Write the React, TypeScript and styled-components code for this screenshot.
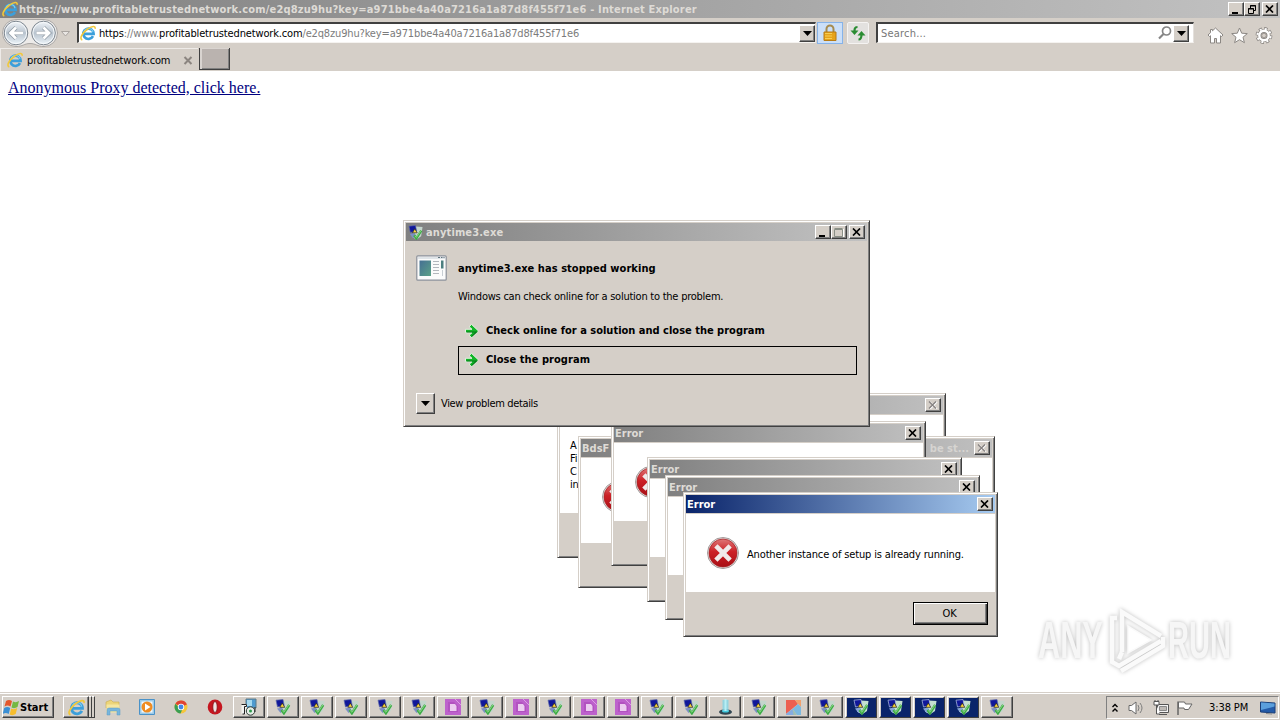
import React from 'react';
import styled, { createGlobalStyle, css } from 'styled-components';

const GlobalStyle = createGlobalStyle`
  * {
    box-sizing: border-box;
  }
  body {
    margin: 0;
    overflow: hidden;
    background: #fff;
    font-family: 'DejaVu Sans Condensed', 'DejaVu Sans', sans-serif;
    font-size: 11px;
    color: #000;
  }
  svg {
    display: block;
    flex: none;
  }
`;

const raised = css`
  border: 1px solid;
  border-color: #fff #404040 #404040 #fff;
  box-shadow: inset -1px -1px 0 #808080;
  background: #d5cfc8;
`;

const Screen = styled.div`
  position: relative;
  width: 1280px;
  height: 720px;
  display: flex;
  flex-direction: column;
  overflow: hidden;
`;

interface TextProps {
  $bold?: boolean;
  $color?: string;
  $spacing?: number;
}
const Text = styled.span<TextProps>`
  white-space: pre;
  line-height: 13px;
  font-weight: ${(props) => (props.$bold ? 'bold' : 'normal')};
  color: ${(props) => props.$color || 'inherit'};
  letter-spacing: ${(props) => props.$spacing ?? -0.15}px;
`;

const Gap = styled.div<{ $width?: number; $height?: number }>`
  flex: none;
  width: ${(props) => props.$width || 0}px;
  height: ${(props) => props.$height || 0}px;
`;

const Spacer = styled.div`
  flex: 1;
`;

/* ---------- window chrome ---------- */

interface TitleBarProps {
  $from: string;
  $to: string;
  $left?: number;
}
const TitleBar = styled.div<TitleBarProps>`
  flex: none;
  display: flex;
  align-items: center;
  height: 18px;
  padding: 0 2px 0 ${(props) => props.$left ?? 2}px;
  background: linear-gradient(90deg, ${(props) => props.$from}, ${(props) => props.$to});
`;

const CaptionButton = styled.div<{ $gap?: number }>`
  ${raised}
  width: 16px;
  height: 14px;
  margin-left: ${(props) => props.$gap || 0}px;
  display: flex;
  align-items: center;
  justify-content: center;
`;

function CloseGlyph({ dim = false }: { dim?: boolean }) {
  return (
    <svg width="10" height="8" viewBox="0 0 10 8">
      {dim && <path d="M2 1l7 7M9 1l-7 7" stroke="#fff" strokeWidth="1.4" />}
      <path d="M1 .5l7 7M8 .5l-7 7" stroke={dim ? '#858180' : '#000'} strokeWidth={dim ? 1.3 : 1.7} />
    </svg>
  );
}

function MinGlyph() {
  return (
    <svg width="10" height="9" viewBox="0 0 10 9">
      <path d="M1 7h6v2H1z" />
    </svg>
  );
}

function MaxGlyph() {
  return (
    <svg width="10" height="9" viewBox="0 0 10 9">
      <path d="M.5 1.5h8v7h-8zM.5.5h8" fill="none" stroke="#8a8f86" />
      <path d="M9.5 1v8.5" stroke="#fff" />
    </svg>
  );
}

function RestoreGlyph() {
  return (
    <svg width="10" height="9" viewBox="0 0 10 9" fill="none" stroke="#000">
      <path d="M3.5 3V.5h5v5H6M3 1h6" />
      <path d="M1.5 3.5h5v5h-5zM1 4h6" />
    </svg>
  );
}

/* ---------- icons ---------- */

function IeIcon({ size = 16 }: { size?: number }) {
  return (
    <svg width={size} height={size} viewBox="0 0 16 16" fill="none">
      <path d="M13 11.200A5.200 5.200 0 1 1 13.600 8.800H4.500" stroke="#3c9fdb" strokeWidth="2.700" />
      <path d="M4 7.200a4.600 4.600 0 0 1 9 0" stroke="#7fd0f2" strokeWidth="1.100" />
      <path d="M2.300 14.900C-1 14 2.200 8 7 4.500S15.800.4 15 3.800" stroke="#f2c83a" strokeWidth="1.600" />
    </svg>
  );
}

function SetupIcon({ size = 16, selected = false }: { size?: number; selected?: boolean }) {
  return (
    <svg width={size} height={size} viewBox="0 0 16 16">
      <path d="M8 1.500l7.500.5-1.500 10-5 3.500-5-3z" fill={selected ? '#c3dfd0' : '#c4d5cc'} />
      <path d="M1 1.200L8 .5l1.200 6L2.500 8z" fill="#10179a" stroke={selected ? '#b9c6e8' : '#5f6aa8'} strokeWidth=".7" />
      <path d="M2 9.500l5-1 1.500 3-3 2.500z" fill={selected ? '#88a7d8' : '#7d8fc4'} />
      <path d="M4.800 8.300L7.200 4l2.600 4.300z" fill="#ffd83a" stroke="#1d1d25" strokeWidth=".7" />
      <path d="M6.500 11l2.400 3.200L14.200 6" fill="none" stroke="#3dab45" strokeWidth="2.500" />
      <path d="M7.200 11.500l1.700 1.700L13.800 6" fill="none" stroke="#9be392" strokeWidth=".8" />
    </svg>
  );
}

function ErrorIcon() {
  return (
    <svg width="34" height="34" viewBox="0 0 34 34">
      <defs>
        <linearGradient id="err" x1="0" y1="0" x2="0" y2="1">
          <stop offset="0" stopColor="#df7777" />
          <stop offset=".45" stopColor="#cc2026" />
          <stop offset="1" stopColor="#a90e15" />
        </linearGradient>
      </defs>
      <circle cx="17" cy="17" r="15.500" fill="#e8dddd" stroke="#8d8585" strokeWidth=".8" />
      <circle cx="17" cy="17" r="14" fill="url(#err)" stroke="#a21d20" strokeWidth=".7" />
      <path d="M11.500 11.500l11 11M22.500 11.500l-11 11" stroke="#f0eaea" strokeWidth="4.600" strokeLinecap="square" />
    </svg>
  );
}

function ArrowIcon() {
  return (
    <svg width="16" height="16" viewBox="0 0 16 16">
      <path
        d="M1.500 6.300H8L5.300 3.800 7.400 1.300 14.500 8l-7.100 6.700-2.100-2.500L8 9.700H1.500z"
        fill="#12b528"
        stroke="#eef6ea"
        strokeWidth=".9"
      />
      <path d="M2.500 9h10L7.800 13.300" fill="none" stroke="#067a18" strokeWidth="1.100" />
    </svg>
  );
}

function DownTriangle() {
  return (
    <svg width="9" height="5" viewBox="0 0 9 5">
      <path d="M0 0h9L4.500 5z" />
    </svg>
  );
}

function AppWindowIcon() {
  return (
    <svg width="31" height="26" viewBox="0 0 31 26">
      <defs>
        <linearGradient id="pic" x1="0" y1="0" x2="1" y2="1">
          <stop offset="0" stopColor="#456f93" />
          <stop offset="1" stopColor="#5ba187" />
        </linearGradient>
      </defs>
      <rect x=".8" y=".8" width="29.400" height="24.400" rx="1" fill="#fbfbfb" stroke="#8b9099" strokeWidth="1.200" />
      <path d="M2 2h27v2H2z" fill="#dfe4e8" />
      <path d="M22 2.500h2M25 2.500h1.500M27.500 2.500h1" stroke="#5e737d" />
      <path d="M3.500 5.500h11.500v15.500h-11.500z" fill="url(#pic)" />
      <path d="M17 6.500h6M17 9.500h6M17 12.500h6M17 15.500h6M17 18.500h6" stroke="#b3b7bd" />
      <path d="M25 5.500h2.500v8h-2.500z" fill="#4c7f80" />
      <path d="M26.500 15v6" stroke="#c8ced3" />
    </svg>
  );
}

/* ---------- browser ---------- */

const Toolbar = styled.div`
  flex: none;
  display: flex;
  align-items: flex-start;
  height: 30px;
  padding: 4px 7px 0 2px;
  background: #d5cfc8;
`;

const Field = styled.div<{ $width: number; $pad: number }>`
  display: flex;
  align-items: center;
  width: ${(props) => props.$width}px;
  height: 21px;
  padding: 0 ${(props) => props.$pad}px 0 1px;
  background: #fff;
  border: 2px solid;
  border-color: #404040 #e4e0dc #f5f3f0 #404040;
  border-width: 2px 1px 1px 2px;
`;

const DropButton = styled.div<{ $width?: number; $height?: number }>`
  ${raised}
  flex: none;
  display: flex;
  align-items: center;
  justify-content: center;
  width: ${(props) => props.$width || 16}px;
  height: ${(props) => props.$height || 17}px;
`;

const ToolButton = styled.div<{ $active?: boolean; $width: number }>`
  display: flex;
  align-items: center;
  justify-content: center;
  width: ${(props) => props.$width}px;
  height: 22px;
  border: 1px solid ${(props) => (props.$active ? '#86b3e9' : '#f5f3f2')};
  border-radius: ${(props) => (props.$active ? 0 : 2)}px;
  background: ${(props) => (props.$active ? '#cbdff8' : '#e3e1df')};
`;

const Actions = styled.div`
  display: flex;
  gap: 7px;
  padding-top: 5px;
`;

const TabStrip = styled.div`
  flex: none;
  display: flex;
  height: 23px;
  background: #d5cfc8;
`;

const Tab = styled.div`
  display: flex;
  align-items: center;
  gap: 4px;
  width: 198px;
  padding: 0 5px 0 6px;
  border: solid #eeebe8;
  border-width: 1px 0 0 1px;
`;

const NewTab = styled.div`
  width: 31px;
  height: 22px;
  margin-left: 1px;
  background: #bab3af;
  border: solid #404040;
  border-width: 0 1px 1px 1px;
  box-shadow: inset 2px 1px 0 #d9d4d0, inset -1px -1px 0 #808080;
`;

const Page = styled.div`
  flex: 1;
  padding: 7px 8px;
  background: #fff;
`;

const ProxyLink = styled.a`
  font-family: 'Liberation Serif', serif;
  font-size: 16px;
  line-height: 19px;
  color: #000080;
  text-decoration: underline;
`;

const NavArea = styled.div`
  flex: none;
  width: 75px;
  margin-top: -3px;
`;

function NavButtons() {
  return (
    <NavArea>
      <svg width="70" height="28" viewBox="2 0 70 28">
        <defs>
          <linearGradient id="nav" x1="0" y1="0" x2="0" y2="1">
            <stop offset="0" stopColor="#f2f6fa" />
            <stop offset=".5" stopColor="#b8c3ce" />
            <stop offset="1" stopColor="#eef6fb" />
          </linearGradient>
        </defs>
        <path d="M16 .5h28a13.500 13.500 0 0 1 0 27c-7 0-8-3-14-3s-7 3-14 3a13.500 13.500 0 0 1 0-27z" fill="#edebe9" stroke="#aaa7a5" />
        {[16, 43.5].map((x) => (
          <g key={x}>
            <circle cx={x} cy="14" r="11.800" fill="url(#nav)" stroke="#7e8790" />
            <circle cx={x} cy="14" r="10.600" fill="none" stroke="#f6f9fb" />
          </g>
        ))}
        <g fill="none" stroke="#8e99a3" strokeWidth="4.200">
          <path d="M23 14H11M16 8.500L10.500 14l5.500 5.500" />
          <path d="M36.500 14h12M43.500 8.500L49 14l-5.500 5.500" />
        </g>
        <g fill="none" stroke="#fff" strokeWidth="2.800">
          <path d="M23 14H11M16 8.500L10.500 14l5.500 5.500" />
          <path d="M36.500 14h12M43.500 8.500L49 14l-5.500 5.500" />
        </g>
        <path d="M61.500 12.500h8L65.500 17z" fill="#e9e6e3" stroke="#aaa5a1" />
      </svg>
    </NavArea>
  );
}

function LockIcon() {
  return (
    <svg width="16" height="18" viewBox="0 0 16 18">
      <path d="M4.500 8V5a3.500 3.500 0 0 1 7 0v3" fill="none" stroke="#a68b4f" strokeWidth="2" />
      <path d="M2 8h12v8.500H2z" fill="#e6a31b" stroke="#b77b14" />
      <path d="M3 9.500h7M3 12h7M3 14.500h7" stroke="#f7ce54" />
    </svg>
  );
}

function RefreshIcon() {
  return (
    <svg width="16" height="16" viewBox="0 0 16 16" fill="none" stroke="#2a8c32" strokeWidth="2.200">
      <path d="M7.500 2C4.500 2 4.500 4 4.500 7" />
      <path d="M.5 5.500l4 4.500 4-4.500z" fill="#2a8c32" stroke="none" />
      <path d="M8.500 14.500c3 0 3-2.500 3-5" />
      <path d="M7.500 10.500l4-4.500 4 4.500z" fill="#2a8c32" stroke="none" />
    </svg>
  );
}

function SearchIcon() {
  return (
    <svg width="14" height="14" viewBox="0 0 14 14" fill="none" stroke="#858585">
      <circle cx="8.500" cy="5" r="4" strokeWidth="1.700" />
      <path d="M5.500 8L1 12.500" strokeWidth="2.200" />
    </svg>
  );
}

function HomeIcon() {
  return (
    <svg width="17" height="17" viewBox="0 0 17 17">
      <path
        d="M8.500 1l7.500 7-1.500 1.500-1-.8V16h-4v-4.500h-2V16h-4V8.700l-1 .8L1 8l2.500-2.300V2.500h2v1.300z"
        fill="#fff"
        stroke="#8b8783"
      />
    </svg>
  );
}

function StarIcon() {
  return (
    <svg width="17" height="17" viewBox="0 0 17 17">
      <path d="M8.500 1l2.200 5.200 5.600.4-4.300 3.600 1.400 5.500-4.900-3-4.900 3L5 10.200.7 6.600l5.600-.4z" fill="#fff" stroke="#8b8783" />
    </svg>
  );
}

function GearIcon() {
  return (
    <svg width="18" height="17" viewBox="0 0 17 17">
      <circle cx="8.500" cy="8.500" r="6.800" fill="none" stroke="#8b8783" strokeWidth="3.200" strokeDasharray="3.200 2.140" />
      <circle cx="8.500" cy="8.500" r="4.600" fill="none" stroke="#8b8783" strokeWidth="4" />
      <circle cx="8.500" cy="8.500" r="6.600" fill="none" stroke="#fff" strokeWidth="2" strokeDasharray="2 3.184" strokeDashoffset="-.6" />
      <circle cx="8.500" cy="8.500" r="4.700" fill="none" stroke="#fff" strokeWidth="2.400" />
      <circle cx="8.500" cy="8.500" r="2.300" fill="#d5cfc8" stroke="#8b8783" strokeWidth=".8" />
    </svg>
  );
}

function Browser() {
  return (
    <>
      <TitleBar $from="#808080" $to="#c2c2c2">
        <IeIcon />
        <Gap $width={1} />
        <Text $bold $color="#dedbd6" $spacing={0.17}>
          https://www.profitabletrustednetwork.com/e2q8zu9hu?key=a971bbe4a40a7216a1a87d8f455f71e6 - Internet Explorer
        </Text>
        <Spacer />
        <CaptionButton><MinGlyph /></CaptionButton>
        <CaptionButton><RestoreGlyph /></CaptionButton>
        <CaptionButton $gap={2}><CloseGlyph /></CaptionButton>
      </TitleBar>
      <Toolbar>
        <NavButtons />
        <Field $width={739} $pad={0}>
          <IeIcon />
          <Gap $width={3} />
          <Text>https</Text>
          <Text $color="#7c7c7c">://www.</Text>
          <Text>profitabletrustednetwork.com</Text>
          <Text $color="#7c7c7c">/e2q8zu9hu?key=a971bbe4a40a7216a1a87d8f455f71e6</Text>
          <Spacer />
          <DropButton><DownTriangle /></DropButton>
        </Field>
        <Gap $width={1} />
        <ToolButton $active $width={26}><LockIcon /></ToolButton>
        <Gap $width={4} />
        <ToolButton $width={22}><RefreshIcon /></ToolButton>
        <Gap $width={7} />
        <Field $width={318} $pad={4}>
          <Gap $width={2} />
          <Text $color="#777" $spacing={0.2}>Search...</Text>
          <Spacer />
          <SearchIcon />
          <Gap $width={1} />
          <DropButton><DownTriangle /></DropButton>
        </Field>
        <Spacer />
        <Actions>
          <HomeIcon />
          <StarIcon />
          <GearIcon />
        </Actions>
      </Toolbar>
      <TabStrip>
        <Tab>
          <IeIcon />
          <Text>profitabletrustednetwork.com</Text>
          <Spacer />
          <svg width="10" height="9" viewBox="0 0 10 9">
            <path d="M1.500 1l7 7M8.500 1l-7 7" stroke="#8b8580" strokeWidth="2" />
          </svg>
        </Tab>
        <NewTab />
      </TabStrip>
      <Page>
        <ProxyLink>Anonymous Proxy detected, click here.</ProxyLink>
      </Page>
    </>
  );
}

/* ---------- dialogs ---------- */

interface WindowProps {
  $x: number;
  $y: number;
  $w: number;
  $h: number;
}
const Window = styled.div<WindowProps>`
  position: absolute;
  left: ${(props) => props.$x}px;
  top: ${(props) => props.$y}px;
  width: ${(props) => props.$w}px;
  height: ${(props) => props.$h}px;
  display: flex;
  flex-direction: column;
  padding: 2px;
  background: #d5cfc8;
  border: 1px solid;
  border-color: #d5cfc8 #404040 #404040 #d5cfc8;
  box-shadow: inset 1px 1px 0 #fff, inset -1px -1px 0 #808080;
`;

const MessageArea = styled.div<{ $height: number; $left: number; $bottom?: number }>`
  display: flex;
  align-items: center;
  height: ${(props) => props.$height}px;
  margin-top: 1px;
  padding-left: ${(props) => props.$left}px;
  padding-bottom: ${(props) => props.$bottom || 0}px;
  gap: 7px;
  background: #fff;
`;

const MessageText = styled.div`
  padding-top: 2px;
`;

const Footer = styled.div`
  flex: 1;
  display: flex;
  align-items: center;
  justify-content: flex-end;
  padding-right: 7px;
`;

const OkButton = styled.div`
  display: flex;
  align-items: center;
  justify-content: center;
  width: 75px;
  height: 23px;
  padding-right: 2px;
  border: 1px solid #000;
  background: #d5cfc8;
  box-shadow: inset 1px 1px 0 #fff, inset -1px -1px 0 #404040, inset -2px -2px 0 #808080;
`;

const Lines = styled.div`
  display: flex;
  flex-direction: column;
  padding-top: 2px;
`;

interface ErrorWindowProps {
  x: number;
  y: number;
  message?: string;
}
function ErrorWindow({ x, y, message }: ErrorWindowProps) {
  return (
    <Window $x={x} $y={y} $w={315} $h={145}>
      <TitleBar $left={1} $from={message ? '#0a246a' : '#808080'} $to={message ? '#a6caf0' : '#c0c0c0'}>
        <Text $bold $color={message ? '#fff' : '#dedbd6'} $spacing={0}>Error</Text>
        <Spacer />
        <CaptionButton><CloseGlyph /></CaptionButton>
      </TitleBar>
      <MessageArea $height={78} $left={20}>
        <ErrorIcon />
        {message && <MessageText><Text>{message}</Text></MessageText>}
      </MessageArea>
      {message && (
        <Footer>
          <OkButton><Text>OK</Text></OkButton>
        </Footer>
      )}
    </Window>
  );
}

const CrashBody = styled.div`
  flex: 1;
  display: flex;
  flex-direction: column;
  padding: 14px 10px 8px;
`;

const CrashRow = styled.div<{ $gap: number; $top?: number; $left?: number }>`
  display: flex;
  align-items: center;
  gap: ${(props) => props.$gap}px;
  margin-top: ${(props) => props.$top || 0}px;
  margin-left: ${(props) => props.$left || 0}px;
`;

const CommandLink = styled.div<{ $focused?: boolean }>`
  display: flex;
  align-items: center;
  gap: 6px;
  width: 399px;
  height: 29px;
  margin-left: 42px;
  padding: 0 0 3px 5px;
  border: 1px solid ${(props) => (props.$focused ? '#000' : 'transparent')};

  svg {
    margin-top: 2px;
  }
`;

function CrashWindow() {
  return (
    <Window $x={403} $y={220} $w={467} $h={207}>
      <TitleBar $from="#808080" $to="#c2c2c2">
        <SetupIcon size={15} />
        <Gap $width={3} />
        <Text $bold $color="#dedbd6" $spacing={0.12}>anytime3.exe</Text>
        <Spacer />
        <CaptionButton><MinGlyph /></CaptionButton>
        <CaptionButton><MaxGlyph /></CaptionButton>
        <CaptionButton $gap={2}><CloseGlyph /></CaptionButton>
      </TitleBar>
      <CrashBody>
        <CrashRow $gap={11}>
          <AppWindowIcon />
          <Text $bold $spacing={0.05}>anytime3.exe has stopped working</Text>
        </CrashRow>
        <CrashRow $gap={0} $top={9} $left={42}>
          <Text $spacing={-0.24}>Windows can check online for a solution to the problem.</Text>
        </CrashRow>
        <Gap $height={14} />
        <CommandLink>
          <ArrowIcon />
          <Text $bold $spacing={0}>Check online for a solution and close the program</Text>
        </CommandLink>
        <CommandLink $focused>
          <ArrowIcon />
          <Text $bold $spacing={0.05}>Close the program</Text>
        </CommandLink>
        <CrashRow $gap={6} $top={18}>
          <DropButton $width={19} $height={21}><DownTriangle /></DropButton>
          <Text $spacing={-0.34}>View problem details</Text>
        </CrashRow>
      </CrashBody>
    </Window>
  );
}

function Dialogs() {
  return (
    <>
      <Window $x={557} $y={393} $w={389} $h={165}>
        <TitleBar $from="#808080" $to="#c0c0c0">
          <Spacer />
          <CaptionButton><CloseGlyph dim /></CaptionButton>
        </TitleBar>
        <MessageArea $height={98} $left={10}>
          <Lines>
            <Text>A</Text>
            <Text>Fi</Text>
            <Text>C</Text>
            <Text>in</Text>
          </Lines>
        </MessageArea>
      </Window>
      <Window $x={578} $y={436} $w={417} $h={152}>
        <TitleBar $left={1} $from="#808080" $to="#c0c0c0">
          <Text $bold $color="#dedbd6" $spacing={0}>BdsF</Text>
          <Spacer />
          <Text $bold $color="#d6d4d1" $spacing={0}>be st...</Text>
          <Gap $width={5} />
          <CaptionButton><CloseGlyph dim /></CaptionButton>
        </TitleBar>
        <MessageArea $height={85} $left={20} $bottom={7}>
          <ErrorIcon />
        </MessageArea>
      </Window>
      <ErrorWindow x={611} y={421} />
      <ErrorWindow x={647} y={457} />
      <ErrorWindow x={665} y={475} />
      <ErrorWindow x={683} y={492} message="Another instance of setup is already running." />
      <CrashWindow />
    </>
  );
}

/* ---------- watermark ---------- */

const Watermark = styled.div`
  position: absolute;
  left: 1038px;
  top: 606px;
  width: 194px;
  height: 68px;
  display: flex;
  align-items: center;
  filter: drop-shadow(0 0 2px rgba(0, 0, 0, 0.26));
`;

const WatermarkWord = styled.div<{ $scale: number }>`
  flex: none;
  width: 66px;
  font-family: 'Liberation Sans', sans-serif;
  font-size: 52px;
  font-weight: bold;
  line-height: 68px;
  white-space: nowrap;
  color: #f6f6f6;
  transform: scaleX(${(props) => props.$scale});
  transform-origin: 0 50%;
`;

function AnyRunMark() {
  return (
    <Watermark>
      <WatermarkWord $scale={0.59}>ANY</WatermarkWord>
      <svg width="64" height="68" viewBox="0 0 64 68" fill="none" stroke="#fafafa" strokeWidth="4.500">
        <path d="M18 46V6l39 24" />
        <path d="M13 12H8v44l7 4 42-25" />
        <path d="M18 46l-3 7" />
        <path d="M24 47V20l23 14z" fill="#fff" strokeWidth="1.500" />
        <path d="M17 65l42-25V31" />
      </svg>
      <WatermarkWord $scale={0.56}>RUN</WatermarkWord>
    </Watermark>
  );
}

/* ---------- taskbar ---------- */

const Taskbar = styled.div`
  flex: none;
  display: flex;
  align-items: flex-start;
  height: 28px;
  padding: 3px 1px 0 2px;
  background: #d5cfc8;
  border-top: 1px solid #d5cfc8;
  box-shadow: inset 0 1px 0 #fff;
`;

const StartButton = styled.div`
  ${raised}
  display: flex;
  align-items: center;
  width: 52px;
  height: 22px;
`;

const TaskButton = styled.div<{ $width?: number; $gap?: number }>`
  ${raised}
  flex: none;
  display: flex;
  align-items: center;
  justify-content: center;
  width: ${(props) => props.$width || 32}px;
  height: 22px;
  margin-right: ${(props) => props.$gap ?? 2}px;
`;

const Highlight = styled.div`
  display: flex;
  align-items: center;
  justify-content: center;
  width: 29px;
  height: 19px;
  background: #0a246a;
`;

const StackEdge = styled.div`
  width: 3px;
  height: 22px;
  border-right: 1px solid #404040;
  border-top: 1px solid #fff;
  border-bottom: 1px solid #404040;
`;

const Pinned = styled.div`
  display: flex;
  align-items: center;
  justify-content: center;
  width: 34px;
  height: 22px;
`;

const Tray = styled.div`
  display: flex;
  align-items: center;
  width: 173px;
  height: 23px;
  padding: 0 2px 0 4px;
  border: 1px solid;
  border-color: #808080 #fff #fff #808080;
`;

function WindowsFlag() {
  return (
    <svg width="17" height="17" viewBox="0 0 17 17">
      <path d="M3 2q3-2 6 0L7.500 7.500q-3-2-6 0z" fill="#e5572b" />
      <path d="M10 2.500q3 1.500 6-.5l-1.500 6q-3 2-6 .5z" fill="#75b843" />
      <path d="M1.200 9q3-2 6 0l-1.500 6q-3-2-6 0z" fill="#3b8fd4" />
      <path d="M8.200 9.500q3 1.500 6-.5l-1.500 6q-3 2-6 .5z" fill="#f7bd2c" />
    </svg>
  );
}

function FolderIcon() {
  return (
    <svg width="17" height="17" viewBox="0 0 17 17">
      <path d="M1 3l5-2 2 2h6v6H1z" fill="#ecd57a" stroke="#c9ab4d" strokeWidth=".6" />
      <path d="M1.500 5.500h13v8h-13z" fill="#f5e6a0" />
      <path d="M2 16v-5q0-2 2-2h9q2 0 2 2v5h-3v-4H5v4z" fill="#77b5dc" stroke="#5b99c6" strokeWidth=".5" />
    </svg>
  );
}

function MediaIcon() {
  return (
    <svg width="16" height="16" viewBox="0 0 16 16">
      <path d="M.5.5h15v15H.5z" fill="#9ccbe9" stroke="#4a92c8" />
      <path d="M2.500 2.500h11v11h-11z" fill="#f3f8fc" />
      <circle cx="8" cy="8" r="5.500" fill="#ef8c22" />
      <path d="M6 4.500v7L11.500 8z" fill="#fff" />
    </svg>
  );
}

function ChromeIcon() {
  return (
    <svg width="14" height="14" viewBox="0 0 14 14">
      <circle cx="7" cy="7" r="6.500" fill="#f5c63c" />
      <path d="M7 7L1.400 3.700A6.500 6.500 0 0 1 12.900 4.500z" fill="#df4334" />
      <path d="M1.400 3.700A6.500 6.500 0 0 0 6.500 13.500L9 8 4.500 7z" fill="#3a9e53" />
      <circle cx="7" cy="7" r="3.200" fill="#fff" />
      <circle cx="7" cy="7" r="2.400" fill="#4286e8" />
    </svg>
  );
}

function OperaIcon() {
  return (
    <svg width="16" height="16" viewBox="0 0 16 16">
      <ellipse cx="8" cy="8" rx="7.300" ry="7.600" fill="#c5161f" />
      <ellipse cx="8" cy="8" rx="2.200" ry="5.500" fill="#eee3e1" stroke="#7d0b13" strokeWidth=".8" />
    </svg>
  );
}

function InstallerIcon() {
  return (
    <svg width="18" height="18" viewBox="0 0 18 18">
      <path d="M6 1h10v9H6z" fill="#4f9bd0" stroke="#5c7a88" />
      <path d="M7 2h5v6H7z" fill="#a5d9ef" />
      <path d="M1.500 6h5.500v10H1.500z" fill="#f2f2ef" />
      <path d="M1.500 6.500h5v2h-2v7.500h-2" fill="none" stroke="#222" />
      <circle cx="10.500" cy="13" r="4.200" fill="#e6eee7" stroke="#333c38" />
      <circle cx="10.500" cy="13" r="1.500" fill="#2f9a4b" />
      <path d="M15 9v5" fill="none" stroke="#333" />
    </svg>
  );
}

function PurpleIcon() {
  return (
    <svg width="16" height="16" viewBox="0 0 16 16">
      <path d="M0 0h16v16H0z" fill="#bd62cc" />
      <path d="M3 3h6l4 4v6H3z" fill="#b253c0" />
      <path d="M5 5h5l1.500 2v5H5z" fill="#eccdf0" />
      <path d="M10 0l6 6" stroke="#dc9fe5" />
    </svg>
  );
}

function BeamIcon() {
  return (
    <svg width="15" height="16" viewBox="0 0 15 16">
      <ellipse cx="7.500" cy="13" rx="6.500" ry="2.800" fill="#304652" />
      <ellipse cx="7.500" cy="12" rx="3.500" ry="1.600" fill="#42cbe0" />
      <path d="M4.500 1h6v11h-6z" fill="#7ed6e8" opacity=".75" />
      <path d="M6.500 0h2v12h-2z" fill="#b8eff5" />
    </svg>
  );
}

function ColorsIcon() {
  return (
    <svg width="15" height="15" viewBox="0 0 15 15">
      <path d="M0 0h9l3 4-6 5-6 5z" fill="#ec5f50" />
      <path d="M9 0h6v7l-3-3z" fill="#f2a06c" />
      <path d="M12 4l3 3v8h-4L6.500 9z" fill="#7cb9e0" />
      <path d="M0 14l6.500-5 4.500 6H0z" fill="#9fc0b4" />
      <path d="M0 14l6.500-5 1 6H0z" fill="#86ace0" />
    </svg>
  );
}

const TASKS = [
  'installer', 'setup', 'setup', 'setup', 'setup', 'setup', 'purple', 'setup',
  'purple', 'setup', 'purple', 'purple', 'setup', 'setup', 'beam', 'setup',
  'colors', 'setup', 'alert', 'alert', 'alert', 'alert', 'setup',
];

function TaskIcon({ kind }: { kind: string }) {
  switch (kind) {
    case 'installer':
      return <InstallerIcon />;
    case 'purple':
      return <PurpleIcon />;
    case 'beam':
      return <BeamIcon />;
    case 'colors':
      return <ColorsIcon />;
    case 'alert':
      return <Highlight><SetupIcon selected /></Highlight>;
    default:
      return <SetupIcon />;
  }
}

function TrayIcons() {
  return (
    <>
      <svg width="9" height="10" viewBox="0 0 9 10" fill="none" stroke="#000" strokeWidth="1.400">
        <path d="M1.500 4L4 1.500 6.500 4M1.500 8.500L4 6l2.500 2.500" />
      </svg>
      <Gap $width={8} />
      <svg width="17" height="14" viewBox="0 0 17 14">
        <path d="M1 4.500h2.500L8 1v12L3.500 9.500H1z" fill="#fff" stroke="#686868" />
        <path d="M10 4q2 3 0 6M12 2q4 5 0 10" fill="none" stroke="#7e7e7e" />
      </svg>
      <Gap $width={8} />
      <svg width="16" height="16" viewBox="0 0 16 16">
        <path d="M4.500 4.500h11v8h-11zM6 14.500h8" fill="#f2f2f2" stroke="#555" />
        <path d="M6.500 6.500h7v4h-7z" fill="#bdb9b5" stroke="#888" />
        <path d="M1 1.500h5V5H1zM3.500 5v9H7M2 0v2M5 0v2" fill="#fff" stroke="#555" />
      </svg>
      <Gap $width={7} />
      <svg width="17" height="16" viewBox="0 0 17 16">
        <path d="M2 1.500V15" stroke="#666" strokeWidth="1.500" />
        <path d="M2.500 2h6l1 2H16l-3.500 5.500H8.500L8 8H2.500z" fill="#fff" stroke="#666" />
      </svg>
      <Gap $width={16} />
      <Text $spacing={-0.1}>3:38 PM</Text>
      <Spacer />
      <svg width="16" height="14" viewBox="0 0 16 14">
        <path d="M.5 1l14.500 1v10L.5 11z" fill="#245ba8" stroke="#1b3f78" />
        <path d="M1 1.500l13.500 1v3L1 9z" fill="#5b9fdc" />
        <path d="M6 12.500l6 .5" stroke="#888" />
      </svg>
    </>
  );
}

function App() {
  return (
    <Screen>
      <GlobalStyle />
      <Browser />
      <Taskbar>
        <StartButton>
          <WindowsFlag />
          <Text $bold $spacing={0}>Start</Text>
        </StartButton>
        <Gap $width={9} />
        <TaskButton $width={26} $gap={0}><IeIcon size={17} /></TaskButton>
        <StackEdge />
        <StackEdge />
        <Gap $width={1} />
        <Pinned><FolderIcon /></Pinned>
        <Pinned><MediaIcon /></Pinned>
        <Pinned><ChromeIcon /></Pinned>
        <Pinned><OperaIcon /></Pinned>
        <Gap $width={1} />
        {TASKS.map((kind, index) => (
          <TaskButton key={index}><TaskIcon kind={kind} /></TaskButton>
        ))}
        <Spacer />
        <Tray><TrayIcons /></Tray>
      </Taskbar>
      <Dialogs />
      <AnyRunMark />
    </Screen>
  );
}

export default App;
